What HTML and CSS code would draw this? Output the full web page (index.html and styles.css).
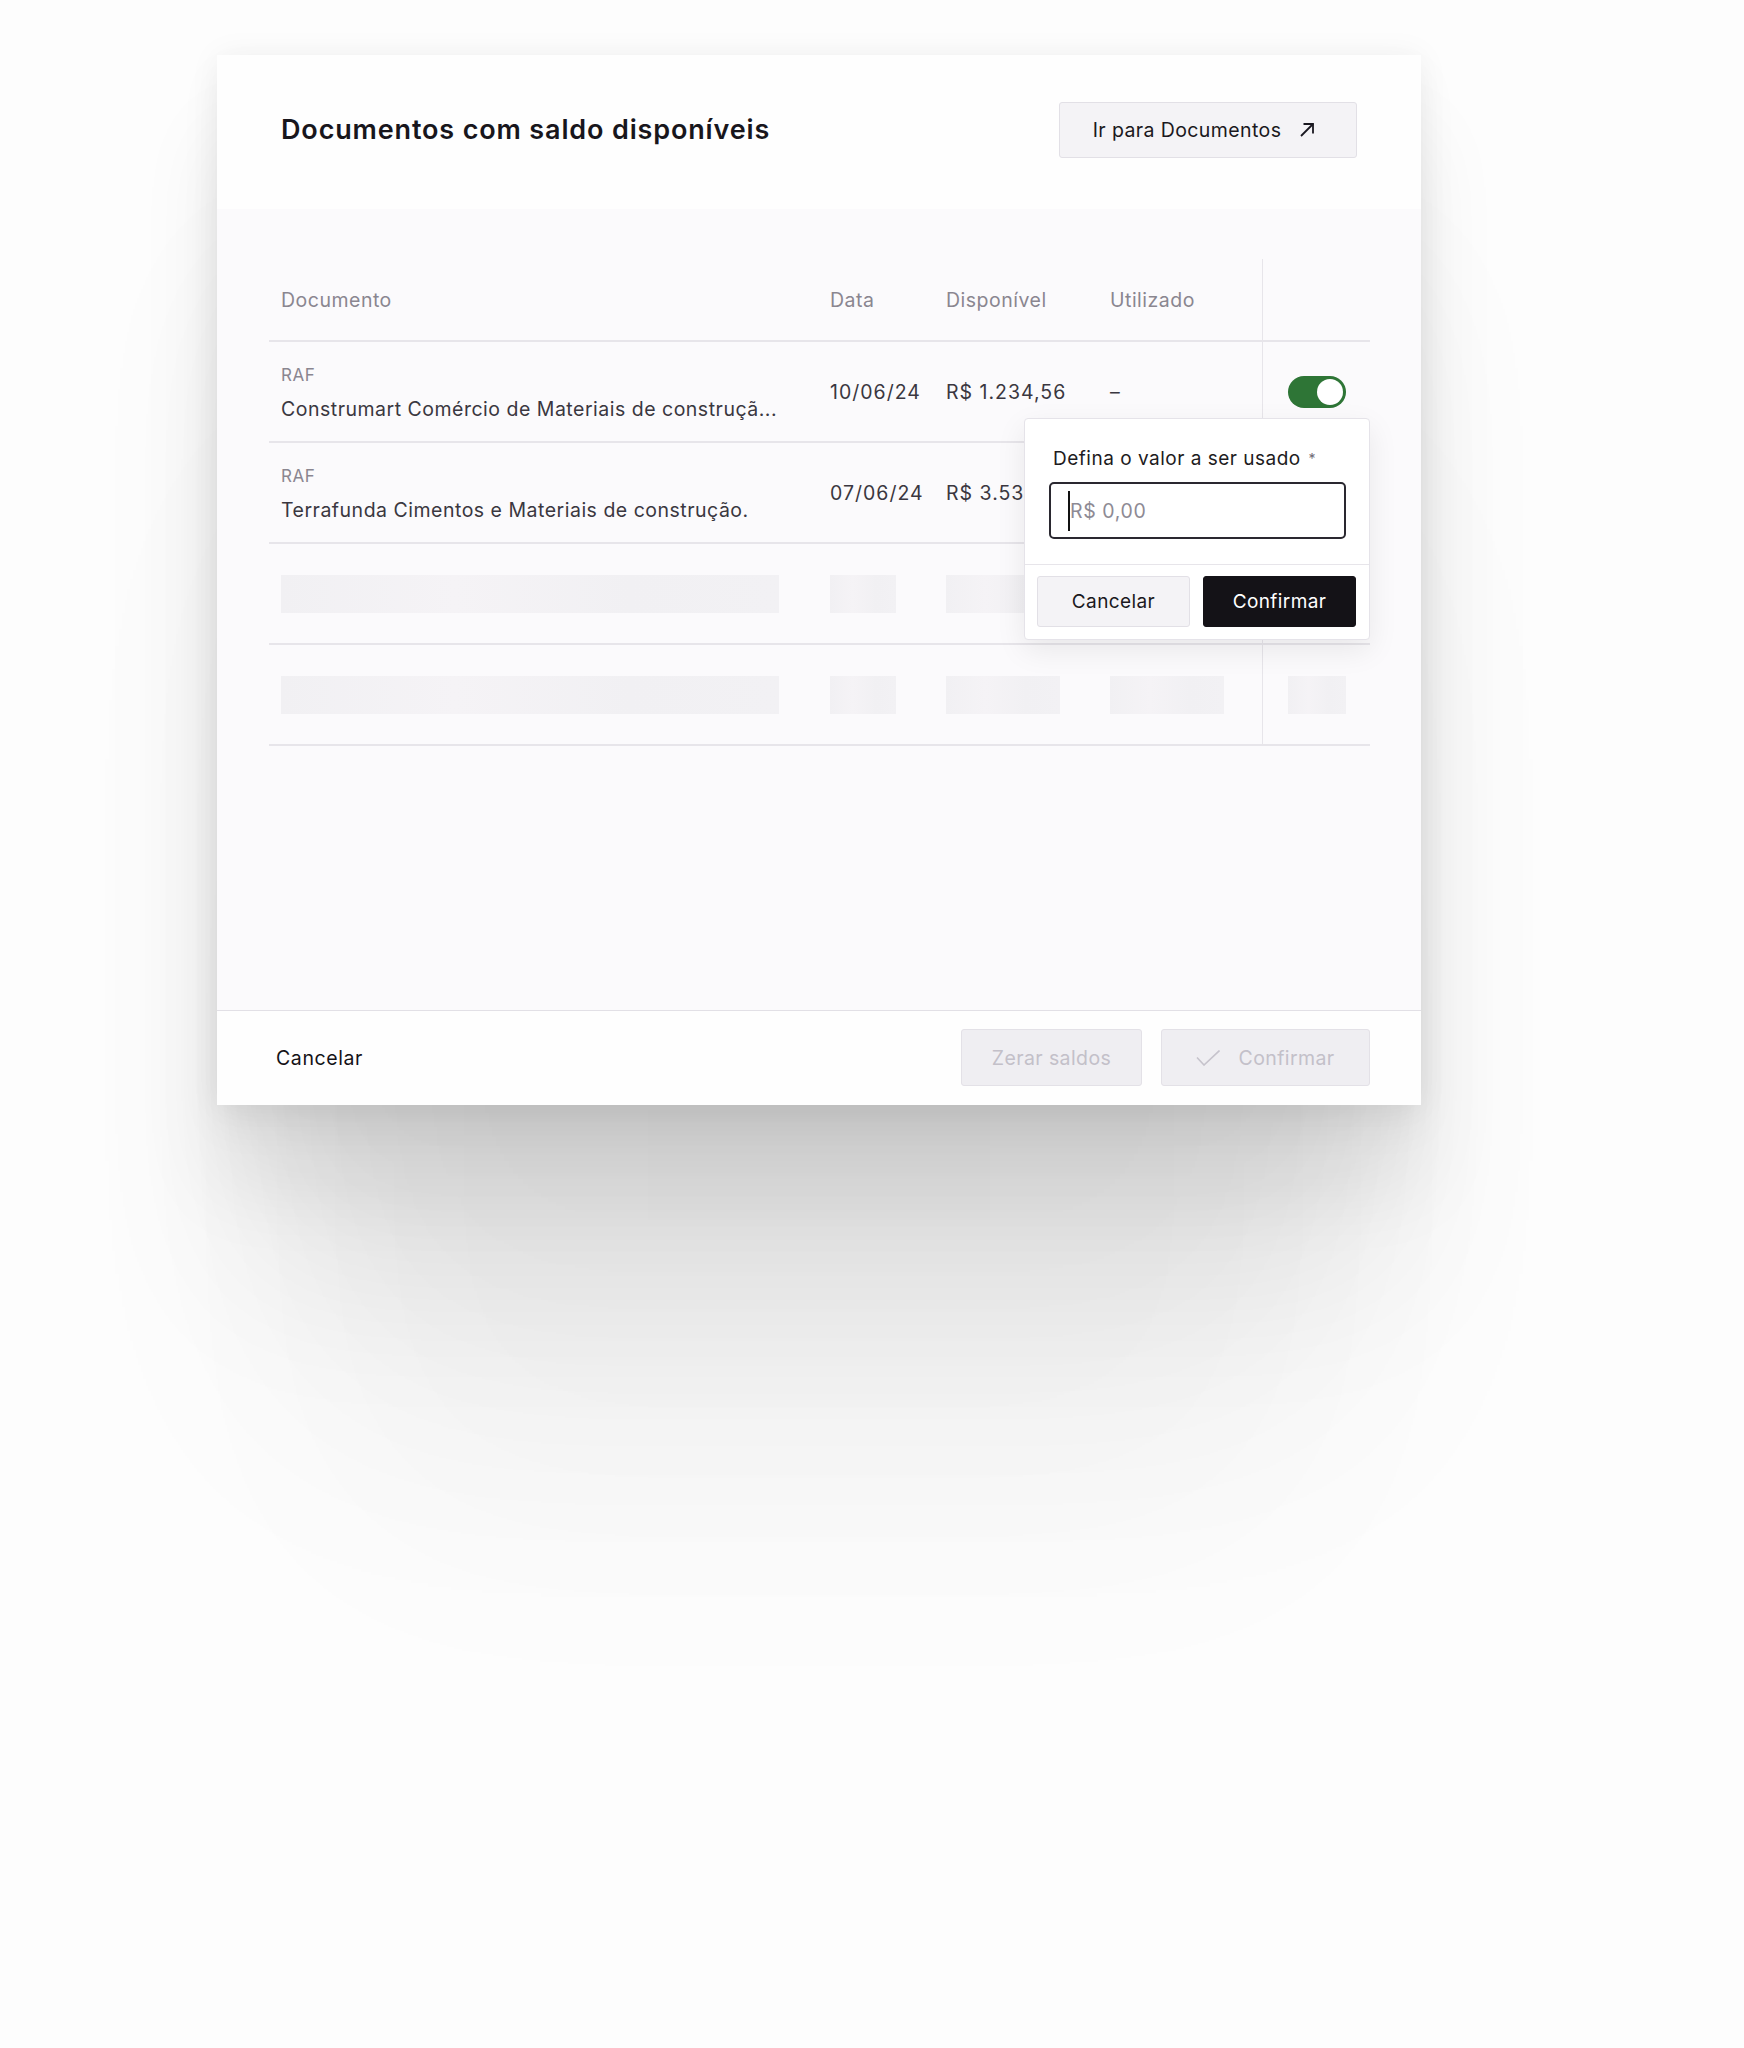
FILE: index.html
```html
<!DOCTYPE html>
<html lang="pt-BR">
<head>
    <meta charset="UTF-8">
    <meta name="viewport" content="width=device-width, initial-scale=1.0">
    <title>Documentos com saldo disponíveis</title>
    <link rel="stylesheet" href="styles.css">
</head>
<body>
    <div class="page">
        <div class="modal">
            <div class="modal-header">
                <h1>Documentos com saldo disponíveis</h1>
                <button class="btn btn-secondary btn-link">
                    Ir para Documentos
                    <svg width="16" height="16" viewBox="0 0 16 16" fill="none" stroke="#1a1820" stroke-width="1.8">
                        <path d="M2 14 L14 2"/>
                        <path d="M4.5 2 H14 V11.5"/>
                    </svg>
                </button>
            </div>

            <div class="modal-body">
                <div class="table">
                    <div class="row head">
                        <div class="cell">Documento</div>
                        <div class="cell">Data</div>
                        <div class="cell">Disponível</div>
                        <div class="cell">Utilizado</div>
                        <div class="cell action"></div>
                    </div>

                    <div class="row">
                        <div class="cell doc">
                            <span class="doc-type">RAF</span>
                            <span class="doc-name">Construmart Comércio de Materiais de construçã...</span>
                        </div>
                        <div class="cell num">10/06/24</div>
                        <div class="cell num">R$ 1.234,56</div>
                        <div class="cell">–</div>
                        <div class="cell action">
                            <span class="toggle"><span class="knob"></span></span>
                        </div>
                    </div>

                    <div class="row">
                        <div class="cell doc">
                            <span class="doc-type">RAF</span>
                            <span class="doc-name">Terrafunda Cimentos e Materiais de construção.</span>
                        </div>
                        <div class="cell num">07/06/24</div>
                        <div class="cell num">R$ 3.534,00</div>
                        <div class="cell">–</div>
                        <div class="cell action"></div>
                    </div>

                    <div class="row">
                        <div class="cell"><span class="skeleton sk-doc"></span></div>
                        <div class="cell"><span class="skeleton sk-date"></span></div>
                        <div class="cell"><span class="skeleton sk-value"></span></div>
                        <div class="cell"><span class="skeleton sk-value"></span></div>
                        <div class="cell action"><span class="skeleton sk-toggle"></span></div>
                    </div>

                    <div class="row">
                        <div class="cell"><span class="skeleton sk-doc"></span></div>
                        <div class="cell"><span class="skeleton sk-date"></span></div>
                        <div class="cell"><span class="skeleton sk-value"></span></div>
                        <div class="cell"><span class="skeleton sk-value"></span></div>
                        <div class="cell action"><span class="skeleton sk-toggle"></span></div>
                    </div>

                    <!-- popover do valor a ser usado -->
                    <div class="popover">
                        <div class="popover-body">
                            <label>Defina o valor a ser usado <span class="req">*</span></label>
                            <div class="field">
                                <span class="caret"></span>
                                <span class="placeholder">R$ 0,00</span>
                            </div>
                        </div>
                        <div class="popover-footer">
                            <button class="btn btn-secondary">Cancelar</button>
                            <button class="btn btn-primary">Confirmar</button>
                        </div>
                    </div>
                </div>
            </div>

            <div class="modal-footer">
                <button class="btn-text">Cancelar</button>
                <div class="footer-actions">
                    <button class="btn btn-disabled btn-zerar">Zerar saldos</button>
                    <button class="btn btn-disabled btn-confirm">
                        <svg width="24" height="16" viewBox="0 0 24 16" fill="none" stroke="#c6c3cc" stroke-width="1.6">
                            <polyline points="1,7.5 8,15 23.5,0.5"/>
                        </svg>
                        Confirmar
                    </button>
                </div>
            </div>
        </div>
    </div>
</body>
</html>
```

FILE: styles.css
```css
body {
    margin: 0;
    background-color: #fdfdfd;
    font-family: Inter, "Liberation Sans", sans-serif;
    color: #1a1820;
}

.page {
    padding: 55px 0 0 217px;
    height: 1993px;
}

.modal {
    width: 1204px;
    background-color: #fefefe;
    box-shadow: 0 0 30px rgba(0, 0, 0, 0.05),
                0 20px 40px rgba(0, 0, 0, 0.05),
                0 80px 80px rgba(0, 0, 0, 0.07),
                0 200px 160px -30px rgba(0, 0, 0, 0.07),
                0 380px 260px -80px rgba(0, 0, 0, 0.05),
                0 550px 350px -120px rgba(0, 0, 0, 0.025);
}

.modal-header {
    display: flex;
    align-items: center;
    justify-content: space-between;
    height: 154px;
    padding: 0 64px 5px;
    box-sizing: border-box;
}

h1 {
    margin: 0;
    font-size: 27px;
    font-weight: 600;
    letter-spacing: 0.85px;
    color: #18161c;
}

.btn {
    font-family: inherit;
    font-size: 19.5px;
    letter-spacing: 0.4px;
    border-radius: 3px;
    border: 1px solid transparent;
    display: inline-flex;
    align-items: center;
    justify-content: center;
    box-sizing: border-box;
    cursor: pointer;
}

.btn-secondary {
    background-color: #f4f3f6;
    border-color: #e2e0e6;
    color: #1a1820;
}

.btn-primary {
    background-color: #141217;
    border-color: #141217;
    color: #fff;
}

.btn-link {
    width: 298px;
    height: 56px;
    gap: 18px;
    padding: 0 8px 0 0;
}

.modal-body {
    background-color: #fbfafc;
    height: 801px;
    padding: 50px 51px 0 52px;
    box-sizing: border-box;
}

.table {
    position: relative;
}

.row {
    display: grid;
    grid-template-columns: 549px 116px 164px 164px 108px;
    height: 101px;
    border-bottom: 2px solid #e7e5ea;
    box-sizing: border-box;
    font-size: 19.5px;
    letter-spacing: 0.5px;
    color: #3a3740;
}

.row.head {
    height: 83px;
    color: #8a8690;
}

.cell {
    display: flex;
    align-items: center;
    padding-left: 12px;
}

.cell.num {
    letter-spacing: 1px;
}

.cell.action {
    border-left: 1px solid #e7e5ea;
    padding-left: 0;
    justify-content: center;
}

.cell.doc {
    flex-direction: column;
    align-items: flex-start;
    justify-content: center;
    gap: 8px;
}

.doc-type {
    font-size: 17px;
    line-height: 26px;
    color: #8a8690;
}

.doc-name {
    line-height: 26px;
}

.toggle {
    width: 58px;
    height: 32px;
    border-radius: 16px;
    background-color: #2e7536;
    display: flex;
    align-items: center;
    justify-content: flex-end;
    padding: 0 3px;
    box-sizing: border-box;
}

.knob {
    width: 26px;
    height: 26px;
    border-radius: 50%;
    background-color: #fff;
}

.skeleton {
    display: block;
    height: 38px;
    background: linear-gradient(90deg, #f1f0f3 0%, #f5f3f6 35%, #f1f0f3 70%, #f2f1f4 100%);
}

.sk-doc { width: 498px; }
.sk-date { width: 66px; }
.sk-value { width: 114px; }
.sk-toggle { width: 58px; }

.popover {
    position: absolute;
    top: 159px;
    right: 0;
    width: 346px;
    background-color: #fff;
    border: 1px solid #e5e3e9;
    border-radius: 4px;
    box-shadow: 0 10px 30px rgba(0, 0, 0, 0.08);
    box-sizing: border-box;
}

.popover-body {
    padding: 28px 23px 25px 24px;
}

.popover label {
    display: block;
    font-size: 19px;
    line-height: 24px;
    letter-spacing: 0.5px;
    padding-left: 4px;
    margin-bottom: 11px;
    color: #1d1b21;
}

.req {
    font-size: 14px;
    color: #6e6a74;
    vertical-align: top;
    margin-left: 2px;
}

.field {
    height: 57px;
    border: 2px solid #2a2830;
    border-radius: 5px;
    display: flex;
    align-items: center;
    padding-left: 17px;
    box-sizing: border-box;
}

.caret {
    width: 2px;
    height: 40px;
    background-color: #111;
}

.placeholder {
    font-size: 19.5px;
    letter-spacing: 0.6px;
    color: #8e8a94;
}

.popover-footer {
    display: flex;
    gap: 13px;
    padding: 11px 12px 12px 12px;
    border-top: 1px solid #e7e5ea;
}

.popover-footer .btn {
    width: 153px;
    height: 51px;
    font-size: 19px;
}

.modal-footer {
    display: flex;
    align-items: center;
    justify-content: space-between;
    border-top: 1px solid #e2e0e6;
    padding: 18px 51px 19px 59px;
    background-color: #fefefe;
}

.btn-text {
    background: none;
    border: none;
    padding: 0;
    font-family: inherit;
    font-size: 19.5px;
    letter-spacing: 0.6px;
    color: #141217;
}

.footer-actions {
    display: flex;
    gap: 19px;
}

.btn-disabled {
    height: 57px;
    background-color: #efeef2;
    border-color: #e3e1e7;
    color: #c3c0c9;
}

.btn-zerar {
    width: 181px;
}

.btn-confirm {
    width: 209px;
    gap: 18px;
}
```
